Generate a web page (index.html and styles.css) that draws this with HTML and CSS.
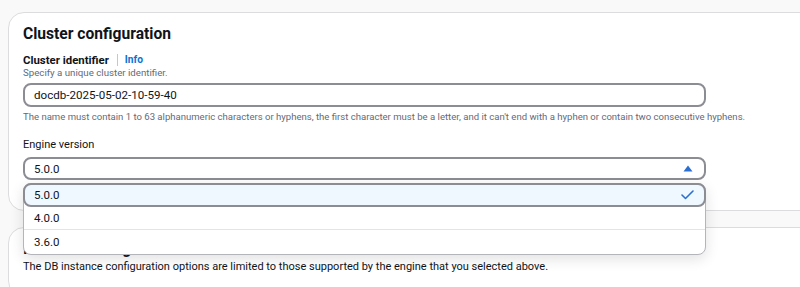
FILE: index.html
```html
<!DOCTYPE html>
<html lang="en">
<head>
<meta charset="utf-8">
<title>Cluster configuration</title>
<link rel="stylesheet" href="styles.css">
</head>
<body>
<div class="page">
  <section class="card card-top">
    <h2 class="card-title">Cluster configuration</h2>
    <div class="field">
      <div class="label-row">
        <span class="label">Cluster identifier</span>
        <span class="divider"></span>
        <a class="info">Info</a>
      </div>
      <div class="desc">Specify a unique cluster identifier.</div>
      <div class="input">docdb-2025-05-02-10-59-40</div>
      <div class="help">The name must contain 1 to 63 alphanumeric characters or hyphens, the first character must be a letter, and it can't end with a hyphen or contain two consecutive hyphens.</div>
    </div>
    <div class="field field-engine">
      <div class="label-plain">Engine version</div>
      <div class="select-wrap">
        <div class="select">
          <span>5.0.0</span>
          <svg class="caret" width="10" height="7" viewBox="0 0 10 7"><path d="M5 0.5 L9.5 6.5 L0.5 6.5 Z" fill="#2a6fd1"/></svg>
        </div>
        <ul class="dropdown">
          <li class="option selected">
            <span>5.0.0</span>
            <svg class="check" width="13" height="10" viewBox="0 0 13 10"><path d="M1 5 L4.5 8.5 L12 1" fill="none" stroke="#2a6fd1" stroke-width="1.6" stroke-linecap="round" stroke-linejoin="round"/></svg>
          </li>
          <li class="option sep"><span>4.0.0</span></li>
          <li class="option"><span>3.6.0</span></li>
        </ul>
      </div>
    </div>
  </section>
  <section class="card card-bottom">
    <h2 class="card-title">Instance configuration</h2>
    <div class="body-text">The DB instance configuration options are limited to those supported by the engine that you selected above.</div>
  </section>
</div>
</body>
</html>
```
FILE: styles.css
```css
html, body {
  margin: 0;
  padding: 0;
}
body {
  background: #f9f9f9;
  font-family: Roboto, "Open Sans", sans-serif;
  color: #0f141a;
  overflow: hidden;
  height: 287px;
}
.page {
  padding: 12px 0 0 8px;
}
.card {
  width: 840px;
  box-sizing: border-box;
  background: #ffffff;
  border: 1px solid #dcdcde;
  border-radius: 16px;
  padding: 10px 14px 30px 14px;
}
.card-top {
  position: relative;
  z-index: 2;
}
.card-bottom {
  margin-top: 16px;
  height: 70px;
}
.card-title {
  margin: 0;
  font-size: 15.6px;
  line-height: 22px;
  font-weight: 700;
  color: #0f141a;
}
.field {
  width: 683px;
}
.label-row {
  margin-top: 8px;
  display: flex;
  align-items: center;
  height: 14px;
}
.label {
  font-size: 11.4px;
  font-weight: 700;
  line-height: 14px;
}
.divider {
  width: 1px;
  height: 12px;
  background: #c6c6cd;
  margin: 0 7px 0 8px;
}
.info {
  font-size: 10.2px;
  font-weight: 700;
  color: #0972d3;
  line-height: 14px;
}
.desc {
  font-size: 9.7px;
  line-height: 12px;
  color: #5f6b7a;
}
.input {
  margin-top: 4px;
  height: 24px;
  box-sizing: border-box;
  border: 2px solid #8c8c94;
  border-radius: 8px;
  padding: 0 9px;
  font-size: 11.6px;
  line-height: 20px;
  color: #0f141a;
}
.help {
  margin-top: 4px;
  font-size: 9.55px;
  line-height: 12px;
  color: #5f6b7a;
  white-space: nowrap;
}
.field-engine {
  margin-top: 15px;
}
.label-plain {
  font-size: 11px;
  line-height: 14px;
  color: #0f141a;
}
.select-wrap {
  position: relative;
  margin-top: 5px;
}
.select {
  height: 23px;
  box-sizing: border-box;
  border: 2px solid #8c8c94;
  border-radius: 8px;
  padding: 0 11px 0 9px;
  display: flex;
  align-items: center;
  justify-content: space-between;
  font-size: 11.5px;
  color: #0f141a;
}
.dropdown {
  position: absolute;
  top: 26px;
  left: 0;
  right: 0;
  margin: 0;
  padding: 0;
  list-style: none;
  background: #ffffff;
  border: 1px solid #b4b4bb;
  border-radius: 8px;
  box-shadow: 0 4px 14px rgba(0, 7, 22, 0.12);
}
.option {
  display: flex;
  align-items: center;
  justify-content: space-between;
  box-sizing: border-box;
  height: 24px;
  padding: 0 10px 0 10px;
  font-size: 11.5px;
  color: #0f141a;
}
.option.selected {
  margin: -1px -1px 0 -1px;
  border: 2px solid #8c8c94;
  border-radius: 8px;
  background: #f0f8ff;
  padding: 0 10px 0 9px;
}
.option.sep {
  height: 23px;
  border-bottom: 1px solid #e4e4e8;
}
.body-text {
  font-size: 11px;
  line-height: 14px;
  color: #0f141a;
}
```
